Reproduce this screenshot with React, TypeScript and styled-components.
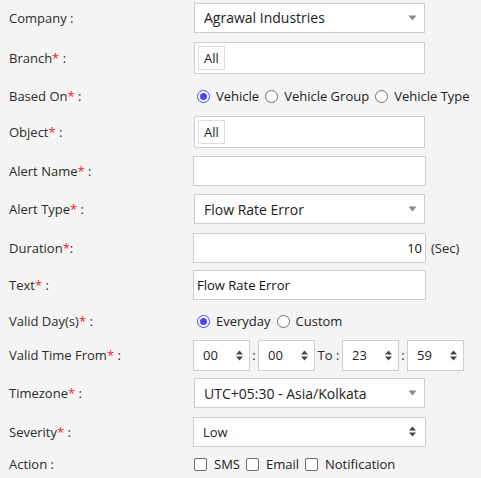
import React from "react";
import styled, { createGlobalStyle } from "styled-components";

const Global = createGlobalStyle`
  html, body { margin: 0; padding: 0; background: #f4f4f4; }
  body { font-family: "Open Sans", "Liberation Sans", sans-serif; color: #2b2b2b; }
`;

const Form = styled.div`
  display: flex;
  flex-direction: column;
  padding-left: 9px;
  width: 472px;
`;

const Row = styled.div<{ $h: number }>`
  display: flex;
  align-items: center;
  height: ${(p) => p.$h}px;
`;

const Label = styled.div`
  width: 184px;
  flex: none;
  font-size: 13px;
  color: #2b2b2b;
`;

const Req = styled.span`
  color: #ee1c25;
`;

const Field = styled.div`
  display: flex;
  align-items: center;
  font-size: 13px;
`;

const SelectBox = styled.div<{ $spin?: boolean }>`
  box-sizing: border-box;
  width: ${(p) => (p.$spin ? 233 : 231)}px;
  height: 30px;
  margin-left: ${(p) => (p.$spin ? 0 : 1)}px;
  background: #fff;
  border: 1px solid #cdcdcd;
  display: flex;
  align-items: center;
  justify-content: space-between;
  padding: 0 ${(p) => (p.$spin ? 9 : 7)}px 0 9px;
  font-size: ${(p) => (p.$spin ? 13 : 14)}px;
  color: #222;
`;

const MultiBox = styled.div`
  box-sizing: border-box;
  width: 231px;
  height: 32px;
  margin-left: 1px;
  background: #fff;
  border: 1px solid #cdcdcd;
  display: flex;
  align-items: center;
  padding-left: 3px;
`;

const Tag = styled.span`
  box-sizing: border-box;
  height: 24px;
  padding: 0 5px;
  border: 1px solid #dcdcdc;
  display: flex;
  align-items: center;
  font-size: 13px;
  color: #222;
`;

const TextBox = styled.div<{ $right?: boolean }>`
  box-sizing: border-box;
  width: 233px;
  height: 30px;
  background: #fff;
  border: 1px solid #cdcdcd;
  display: flex;
  align-items: center;
  justify-content: ${(p) => (p.$right ? "flex-end" : "flex-start")};
  padding: 0 3px;
  font-size: 13px;
  color: #111;
`;

const Unit = styled.span`
  margin-left: 5px;
  font-size: 13px;
`;

const TimeBox = styled.div`
  box-sizing: border-box;
  width: 57px;
  height: 31px;
  background: #fff;
  border: 1px solid #cdcdcd;
  display: flex;
  align-items: center;
  justify-content: space-between;
  padding: 0 6px 0 9px;
  font-size: 13px;
  color: #222;
`;

const Sep = styled.span<{ $w: number }>`
  width: ${(p) => p.$w}px;
  text-align: center;
  font-size: 13px;
`;

const Choice = styled.label<{ $gap: number }>`
  display: flex;
  align-items: center;
  font-size: 13px;
  color: #222;
  margin-right: ${(p) => p.$gap}px;
`;

const Radio = styled.span<{ $on?: boolean }>`
  box-sizing: border-box;
  width: 13px;
  height: 13px;
  border-radius: 50%;
  border: 1px solid ${(p) => (p.$on ? "#4646ff" : "#6f6f6f")};
  background: #fff;
  margin: 0 6px 0 4px;
  display: flex;
  align-items: center;
  justify-content: center;
  &::after {
    content: "";
    display: ${(p) => (p.$on ? "block" : "none")};
    width: 7px;
    height: 7px;
    border-radius: 50%;
    background: #4646ff;
  }
`;

const Check = styled.span`
  box-sizing: border-box;
  width: 13px;
  height: 13px;
  border-radius: 2px;
  border: 1px solid #6f6f6f;
  background: #fff;
  margin: 0 7px 0 1px;
`;

const Caret = () => (
  <svg width="9" height="6" viewBox="0 0 9 6">
    <path d="M0.5 0.5 H8.5 L4.5 5.5 Z" fill="#8a8a8a" />
  </svg>
);

const Spin = () => (
  <svg width="7" height="11" viewBox="0 0 7 11">
    <path d="M3.5 0.5 L7 4.5 H0 Z" fill="#444" />
    <path d="M0 6.5 H7 L3.5 10.5 Z" fill="#444" />
  </svg>
);

const L = ({ text, req, tight }: { text: string; req?: boolean; tight?: boolean }) => (
  <Label>
    {text}
    {req && <Req>*</Req>}
    {tight ? ":" : " :"}
  </Label>
);

export default function App() {
  return (
    <>
      <Global />
      <Form>
        <Row $h={35}>
          <L text="Company" />
          <SelectBox>
            <span>Agrawal Industries</span>
            <Caret />
          </SelectBox>
        </Row>
        <Row $h={45}>
          <L text="Branch" req />
          <MultiBox>
            <Tag>All</Tag>
          </MultiBox>
        </Row>
        <Row $h={32}>
          <L text="Based On" req />
          <Field>
            <Choice $gap={2}><Radio $on />Vehicle</Choice>
            <Choice $gap={2}><Radio />Vehicle Group</Choice>
            <Choice $gap={2}><Radio />Vehicle Type</Choice>
          </Field>
        </Row>
        <Row $h={40}>
          <L text="Object" req />
          <MultiBox>
            <Tag>All</Tag>
          </MultiBox>
        </Row>
        <Row $h={38}>
          <L text="Alert Name" req />
          <TextBox />
        </Row>
        <Row $h={38}>
          <L text="Alert Type" req />
          <SelectBox>
            <span>Flow Rate Error</span>
            <Caret />
          </SelectBox>
        </Row>
        <Row $h={39}>
          <L text="Duration" req tight />
          <TextBox $right>10</TextBox>
          <Unit>(Sec)</Unit>
        </Row>
        <Row $h={36}>
          <L text="Text" req />
          <TextBox>Flow Rate Error</TextBox>
        </Row>
        <Row $h={36}>
          <L text="Valid Day(s)" req />
          <Field>
            <Choice $gap={2}><Radio $on />Everyday</Choice>
            <Choice $gap={2}><Radio />Custom</Choice>
          </Field>
        </Row>
        <Row $h={32}>
          <L text="Valid Time From" req />
          <Field>
            <TimeBox><span>00</span><Spin /></TimeBox>
            <Sep $w={8}>:</Sep>
            <TimeBox><span>00</span><Spin /></TimeBox>
            <Sep $w={27}>To :</Sep>
            <TimeBox><span>23</span><Spin /></TimeBox>
            <Sep $w={8}>:</Sep>
            <TimeBox><span>59</span><Spin /></TimeBox>
          </Field>
        </Row>
        <Row $h={44}>
          <L text="Timezone" req />
          <SelectBox>
            <span>UTC+05:30 - Asia/Kolkata</span>
            <Caret />
          </SelectBox>
        </Row>
        <Row $h={33}>
          <L text="Severity" req />
          <SelectBox $spin>
            <span>Low</span>
            <Spin />
          </SelectBox>
        </Row>
        <Row $h={32}>
          <L text="Action" />
          <Field>
            <Choice $gap={5}><Check />SMS</Choice>
            <Choice $gap={5}><Check />Email</Choice>
            <Choice $gap={5}><Check />Notification</Choice>
          </Field>
        </Row>
      </Form>
    </>
  );
}
